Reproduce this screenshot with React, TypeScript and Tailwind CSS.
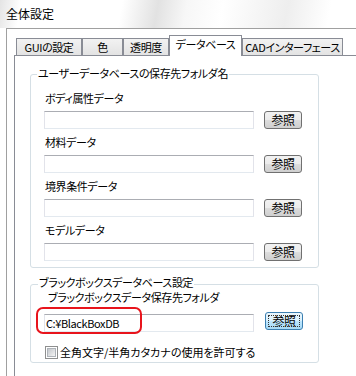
import React from "react";

type TabItem = { label: string; width: string; active?: boolean };

const tabs: TabItem[] = [
  { label: "GUIの設定", width: "w-[66px]" },
  { label: "色", width: "w-[41px]" },
  { label: "透明度", width: "w-[46px]" },
  { label: "データベース", width: "w-[73px]", active: true },
  { label: "CADインターフェース", width: "w-[101px]" },
];

const userFolders = ["ボディ属性データ", "材料データ", "境界条件データ", "モデルデータ"];

const TextBox = ({ value = "" }: { value?: string }) => (
  <div className="h-[18px] w-[210px] border border-[#abadb3] border-l-[#e2e3ea] border-r-[#e2e3ea] border-b-[#e3e9ef] bg-white pl-[1px] leading-[16px]">
    {value}
  </div>
);

const BrowseButton = ({ focused = false }: { focused?: boolean }) =>
  focused ? (
    <button className="relative h-[18px] w-[38px] rounded-[3px] border border-[#3c7fb1] bg-[linear-gradient(#eaf6fd_0%,#d9f0fc_50%,#bee6fd_50%,#a7d9f5_100%)] text-[12px] leading-[16px] text-black">
      <span className="pointer-events-none absolute inset-[2px] border border-dotted border-[#333]" />
      参照
    </button>
  ) : (
    <button className="h-[18px] w-[38px] rounded-[3px] border border-[#707070] bg-[linear-gradient(#f2f2f2_0%,#ebebeb_50%,#dddddd_50%,#cfcfcf_100%)] text-[12px] leading-[16px] text-black">
      参照
    </button>
  );

export default function App() {
  return (
    <div className="relative h-[376px] w-[356px] overflow-hidden bg-white font-['Noto_Sans_CJK_JP',sans-serif] text-[11px] tracking-[-0.4px] text-black [font-feature-settings:'palt'_1]">
      {/* title */}
      <div className="h-[28px] bg-[linear-gradient(100deg,#e4e4e4_0%,#ffffff_6%,#ffffff_34%,#e2e2e2_44%,#f7f7f7_52%,#ffffff_62%,#eeeeee_80%,#ffffff_92%)] pl-[6px] text-[12px] leading-[28px] tracking-normal">
        全体設定
      </div>

      {/* outer frame */}
      <div className="ml-[6px] border-l border-t border-[#a0a0a0] pt-[6px]">
        <div className="flex items-end pl-[9px]">
          {tabs.map((t) =>
            t.active ? (
              <div
                key={t.label}
                className={`relative z-10 -mb-px h-[21px] ${t.width} whitespace-nowrap border border-b-0 border-[#898c95] bg-white pt-[1px] text-center leading-[14px]`}
              >
                {t.label}
              </div>
            ) : (
              <div
                key={t.label}
                className={`h-[17px] ${t.width} whitespace-nowrap border border-b-0 border-[#898c95] bg-[linear-gradient(#f2f2f2,#e3e3e3)] text-center leading-[16px]`}
              >
                {t.label}
              </div>
            )
          )}
        </div>

        {/* tab panel */}
        <div className="ml-[7px] h-[330px] border-l border-t border-[#898c95] bg-white pl-[15px] pt-[18px]">
          {/* user database group */}
          <div className="relative w-[289px] rounded-[3px] border border-[#d5dfe5] pb-[6px] pl-[13px] pt-[16px]">
            <span className="absolute left-[6px] top-[-8px] whitespace-nowrap bg-white px-[1px] leading-[12px]">
              ユーザーデータベースの保存先フォルダ名
            </span>
            {userFolders.map((name, i) => (
              <div key={name} className={i > 0 ? "mt-[6px]" : ""}>
                <div className="pl-[1px] leading-[14px]">{name}</div>
                <div className="mt-[6px] flex items-start gap-[10px]">
                  <TextBox />
                  <BrowseButton />
                </div>
              </div>
            ))}
          </div>

          {/* black box group */}
          <div className="relative mt-[16px] w-[289px] rounded-[3px] border border-[#d5dfe5] pb-[3px] pl-[13px] pt-[6px]">
            <span className="absolute left-[7px] top-[-9px] whitespace-nowrap bg-white px-[1px] leading-[12px]">
              ブラックボックスデータベース設定
            </span>
            <div className="pl-[4px] leading-[12px]">ブラックボックスデータ保存先フォルダ</div>
            <div className="mt-[9px] flex items-start gap-[11px]">
              <div className="mt-[2px]">
                <TextBox value="C:¥BlackBoxDB" />
              </div>
              <BrowseButton focused />
            </div>
            <div className="mt-[13px] flex items-center gap-[2px] pl-[1px]">
              <div className="h-[13px] w-[13px] border border-[#8e8f8f] bg-white p-[1px]">
                <div className="h-full w-full border border-[#aeb3b9] bg-[linear-gradient(135deg,#c3c7cc,#f4f4f4)]" />
              </div>
              <span className="leading-[14px] tracking-normal">全角文字/半角カタカナの使用を許可する</span>
            </div>
          </div>
        </div>
      </div>

      {/* red annotation */}
      <div className="pointer-events-none absolute left-[36px] top-[307px] h-[27px] w-[106px] rounded-[7px] border-2 border-[#e8141c]" />
    </div>
  );
}
